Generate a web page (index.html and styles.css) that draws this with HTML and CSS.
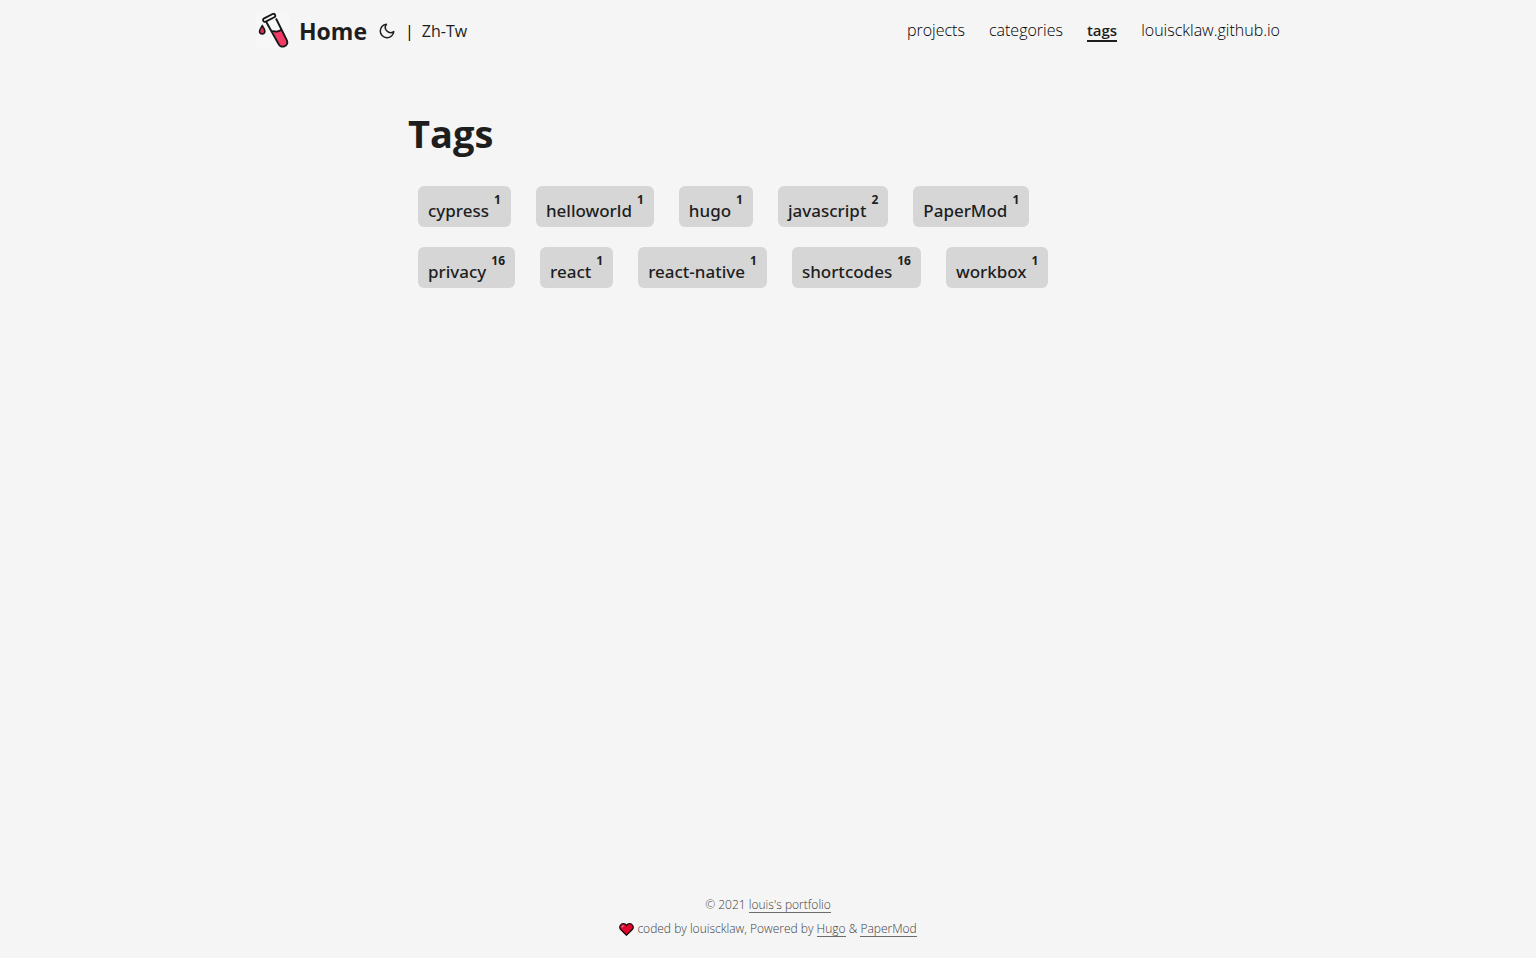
FILE: index.html
```html
<!DOCTYPE html>
<html lang="en">
<head>
<meta charset="utf-8">
<meta name="viewport" content="width=device-width, initial-scale=1">
<title>Tags | louis's portfolio</title>
<link rel="stylesheet" href="styles.css">
</head>
<body>
<header class="header">
  <nav class="nav" aria-label="Main">
    <div class="brand">
      <a class="home" href="#">
        <svg class="logo" viewBox="0 0 36 36" aria-hidden="true">
          <rect width="33" height="36" fill="#f7f7f7"/>
          <path d="M16.600 18.500L25.700 17L30.800 27.200C33 31.500 26 36 23.500 31.800Z" fill="#f43b68"/>
          <path d="M10 8.500L22.300 30.500C24.600 36.500 33 33 31 27.600L20 5.500M15.900 18.400C19 17 20 21 25.600 16.500" fill="none" stroke="#171717" stroke-width="1.900" stroke-linejoin="round"/>
          <rect x="6.600" y="3" width="13.200" height="3.600" rx="1.800" transform="rotate(-27 13.200 4.800)" fill="#f7f7f7" stroke="#171717" stroke-width="1.800"/>
          <path d="M6.300 12.700C5 14.800 3.500 16.500 3.500 18.200A2.700 2.700 0 0 0 8.900 18.200C8.900 16.500 7.700 14.800 6.300 12.700Z" fill="#d92e56" stroke="#171717" stroke-width="1.500"/>
        </svg>
        <span>Home</span>
      </a>
      <button class="theme" type="button" aria-label="Toggle theme">
        <svg viewBox="0 0 24 24" aria-hidden="true"><path d="M21 12.790A9 9 0 1 1 11.210 3 7 7 0 0 0 21 12.790Z" fill="none" stroke="currentColor" stroke-width="2" stroke-linecap="round" stroke-linejoin="round"/></svg>
      </button>
      <span class="divider">|</span>
      <a class="lang" href="#">Zh-Tw</a>
    </div>
    <ul class="menu">
      <li><a href="#">projects</a></li>
      <li><a href="#">categories</a></li>
      <li><a class="active" href="#" aria-current="page">tags</a></li>
      <li><a href="#">louiscklaw.github.io</a></li>
    </ul>
  </nav>
</header>
<main class="main">
  <h1>Tags</h1>
  <ul class="tags">
    <li><a href="#">cypress <sup>1</sup></a></li>
    <li><a href="#">helloworld <sup>1</sup></a></li>
    <li><a href="#">hugo <sup>1</sup></a></li>
    <li><a href="#">javascript <sup>2</sup></a></li>
    <li><a href="#">PaperMod <sup>1</sup></a></li>
    <li><a href="#">privacy <sup>16</sup></a></li>
    <li><a href="#">react <sup>1</sup></a></li>
    <li><a href="#">react-native <sup>1</sup></a></li>
    <li><a href="#">shortcodes <sup>16</sup></a></li>
    <li><a href="#">workbox <sup>1</sup></a></li>
  </ul>
</main>
<footer class="footer">
  <p>© 2021 <a href="#">louis's portfolio</a></p>
  <p><svg class="heart" viewBox="0 0 15 13" aria-hidden="true"><path d="M7.500 12.200L1.500 6.300C-.5 3.500 2 .7 4.300.7C6 .7 7 1.500 7.500 2.400C8 1.500 9 .7 10.700.7C13 .7 15.500 3.500 13.500 6.300Z" fill="#e0062c" stroke="#15080a" stroke-width="1.200"/><path d="M3 4.500C3 3.300 3.800 2.700 4.700 2.700" fill="none" stroke="#f5788c" stroke-width="1.200"/></svg> coded by louiscklaw, Powered by <a href="#">Hugo</a> &amp; <a href="#">PaperMod</a></p>
</footer>
</body>
</html>
```
FILE: styles.css
```css
* { box-sizing: border-box; margin: 0; padding: 0; }

body {
  display: flex;
  flex-direction: column;
  min-height: 100vh;
  background: #f5f5f5;
  color: #1e1e1e;
  font-family: "Open Sans", "Noto Sans", sans-serif;
  font-size: 16px;
}

a { color: inherit; text-decoration: none; }
ul { list-style: none; }

.nav {
  display: flex;
  flex-wrap: wrap;
  justify-content: space-between;
  align-items: center;
  max-width: 1072px;
  min-height: 62px;
  margin: 0 auto;
  padding: 0 24px;
}

.brand, .home { display: flex; align-items: center; }
.home { gap: 7px; font-size: 23px; font-weight: 700; line-height: 62px; }
.logo { width: 36px; height: 36px; }

.theme {
  display: flex;
  margin: 0 9px 0 11px;
  border: 0;
  background: none;
  color: inherit;
}
.theme svg { width: 18px; height: 18px; }
.divider { color: #000; }
.lang { margin-left: 8px; }

.menu { display: flex; flex-wrap: wrap; gap: 24px; color: #000; font-weight: 300; }
.menu a { display: block; line-height: 20px; border-bottom: 2px solid transparent; }
.menu .active { color: #1e1e1e; font-size: 15px; font-weight: 600; border-color: #1e1e1e; }

.main {
  flex: 1;
  width: 100%;
  max-width: 768px;
  margin: 0 auto;
  padding: 45px 24px;
}
.main h1 { font-size: 38px; line-height: 52px; }

.tags {
  display: flex;
  flex-wrap: wrap;
  gap: 20px 25px;
  margin-top: 27px;
  padding: 0 10px;
}
.tags a {
  display: flex;
  align-items: flex-start;
  gap: 5px;
  height: 41px;
  padding: 0 10px;
  border-radius: 6px;
  background: #d6d6d6;
  font-family: "Noto Sans", sans-serif;
  font-size: 17px;
  font-weight: 500;
  line-height: 49px;
}
.tags sup { font-size: 12px; font-weight: 700; line-height: 27px; }

.footer {
  padding: 0 24px 17px;
  color: #404040;
  font-size: 12px;
  font-weight: 300;
  line-height: 24px;
  text-align: center;
}
.footer a { display: inline-block; line-height: 15px; border-bottom: 1px solid #6c6c6c; }
.heart { width: 15px; height: 13px; vertical-align: -3px; }
```
